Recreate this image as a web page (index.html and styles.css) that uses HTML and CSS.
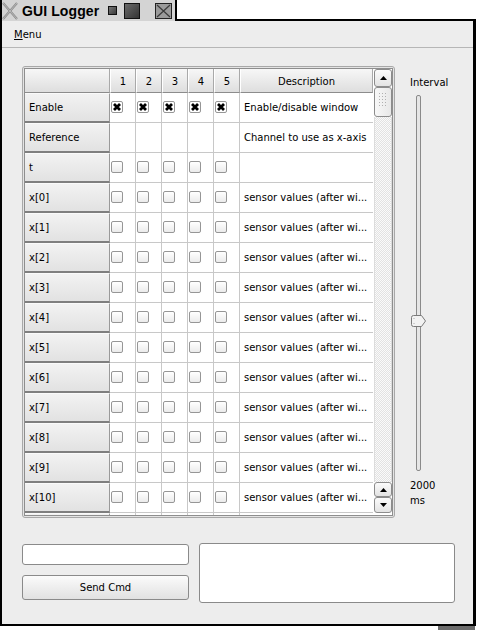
FILE: index.html
```html
<!DOCTYPE html>
<html>
<head>
<meta charset="utf-8">
<link rel="stylesheet" href="styles.css">
</head>
<body>
<div class="titlebar">
  <svg class="wm-icon" width="16" height="18" viewBox="0 0 16 18"><path d="M1 1 L15 17 M15 1 L1 17" stroke="#8c8c8c" stroke-width="2.2" fill="none"/><path d="M1 1 L15 17 M15 1 L1 17" stroke="#c4c4c4" stroke-width="0.8" fill="none"/></svg>
  <span class="title">GUI Logger</span>
  <span class="wbtn wbtn-min"></span>
  <span class="wbtn wbtn-max"></span>
  <svg class="wbtn-close" width="17" height="16" viewBox="0 0 17 16"><rect x="0.5" y="0.5" width="16" height="15" fill="#9a9a9a" stroke="#222"/><path d="M2 2 L15 14 M15 2 L2 14" stroke="#3a3a3a" stroke-width="1.2"/></svg>
</div>
<div class="window">
  <div class="menubar"><span class="menu"><span class="ul">M</span>enu</span></div>
  <div class="content">
    <div class="main">
      <div class="frame">
        <div class="frame-inner">
          <div class="grid">
            <div class="hcell corner"></div>
            <div class="hcell">1</div><div class="hcell">2</div><div class="hcell">3</div><div class="hcell">4</div><div class="hcell">5</div>
            <div class="hcell desc-h">Description</div>

            <div class="rh">Enable</div>
            <div class="cell"><span class="cb on"><svg width="10" height="10" viewBox="0 0 10 10"><path d="M2 2 L8 8 M8 2 L2 8" stroke="#000" stroke-width="2.8"/></svg></span></div>
            <div class="cell"><span class="cb on"><svg width="10" height="10" viewBox="0 0 10 10"><path d="M2 2 L8 8 M8 2 L2 8" stroke="#000" stroke-width="2.8"/></svg></span></div>
            <div class="cell"><span class="cb on"><svg width="10" height="10" viewBox="0 0 10 10"><path d="M2 2 L8 8 M8 2 L2 8" stroke="#000" stroke-width="2.8"/></svg></span></div>
            <div class="cell"><span class="cb on"><svg width="10" height="10" viewBox="0 0 10 10"><path d="M2 2 L8 8 M8 2 L2 8" stroke="#000" stroke-width="2.8"/></svg></span></div>
            <div class="cell"><span class="cb on"><svg width="10" height="10" viewBox="0 0 10 10"><path d="M2 2 L8 8 M8 2 L2 8" stroke="#000" stroke-width="2.8"/></svg></span></div>
            <div class="cell desc">Enable/disable window</div>

            <div class="rh">Reference</div>
            <div class="cell"></div><div class="cell"></div><div class="cell"></div><div class="cell"></div><div class="cell"></div>
            <div class="cell desc">Channel to use as x-axis</div>

            <div class="rh">t</div>
            <div class="cell"><span class="cb"></span></div><div class="cell"><span class="cb"></span></div><div class="cell"><span class="cb"></span></div><div class="cell"><span class="cb"></span></div><div class="cell"><span class="cb"></span></div>
            <div class="cell desc"></div>

            <div class="rh">x[0]</div>
            <div class="cell"><span class="cb"></span></div><div class="cell"><span class="cb"></span></div><div class="cell"><span class="cb"></span></div><div class="cell"><span class="cb"></span></div><div class="cell"><span class="cb"></span></div>
            <div class="cell desc">sensor values (after wi...</div>

            <div class="rh">x[1]</div>
            <div class="cell"><span class="cb"></span></div><div class="cell"><span class="cb"></span></div><div class="cell"><span class="cb"></span></div><div class="cell"><span class="cb"></span></div><div class="cell"><span class="cb"></span></div>
            <div class="cell desc">sensor values (after wi...</div>

            <div class="rh">x[2]</div>
            <div class="cell"><span class="cb"></span></div><div class="cell"><span class="cb"></span></div><div class="cell"><span class="cb"></span></div><div class="cell"><span class="cb"></span></div><div class="cell"><span class="cb"></span></div>
            <div class="cell desc">sensor values (after wi...</div>

            <div class="rh">x[3]</div>
            <div class="cell"><span class="cb"></span></div><div class="cell"><span class="cb"></span></div><div class="cell"><span class="cb"></span></div><div class="cell"><span class="cb"></span></div><div class="cell"><span class="cb"></span></div>
            <div class="cell desc">sensor values (after wi...</div>

            <div class="rh">x[4]</div>
            <div class="cell"><span class="cb"></span></div><div class="cell"><span class="cb"></span></div><div class="cell"><span class="cb"></span></div><div class="cell"><span class="cb"></span></div><div class="cell"><span class="cb"></span></div>
            <div class="cell desc">sensor values (after wi...</div>

            <div class="rh">x[5]</div>
            <div class="cell"><span class="cb"></span></div><div class="cell"><span class="cb"></span></div><div class="cell"><span class="cb"></span></div><div class="cell"><span class="cb"></span></div><div class="cell"><span class="cb"></span></div>
            <div class="cell desc">sensor values (after wi...</div>

            <div class="rh">x[6]</div>
            <div class="cell"><span class="cb"></span></div><div class="cell"><span class="cb"></span></div><div class="cell"><span class="cb"></span></div><div class="cell"><span class="cb"></span></div><div class="cell"><span class="cb"></span></div>
            <div class="cell desc">sensor values (after wi...</div>

            <div class="rh">x[7]</div>
            <div class="cell"><span class="cb"></span></div><div class="cell"><span class="cb"></span></div><div class="cell"><span class="cb"></span></div><div class="cell"><span class="cb"></span></div><div class="cell"><span class="cb"></span></div>
            <div class="cell desc">sensor values (after wi...</div>

            <div class="rh">x[8]</div>
            <div class="cell"><span class="cb"></span></div><div class="cell"><span class="cb"></span></div><div class="cell"><span class="cb"></span></div><div class="cell"><span class="cb"></span></div><div class="cell"><span class="cb"></span></div>
            <div class="cell desc">sensor values (after wi...</div>

            <div class="rh">x[9]</div>
            <div class="cell"><span class="cb"></span></div><div class="cell"><span class="cb"></span></div><div class="cell"><span class="cb"></span></div><div class="cell"><span class="cb"></span></div><div class="cell"><span class="cb"></span></div>
            <div class="cell desc">sensor values (after wi...</div>

            <div class="rh">x[10]</div>
            <div class="cell"><span class="cb"></span></div><div class="cell"><span class="cb"></span></div><div class="cell"><span class="cb"></span></div><div class="cell"><span class="cb"></span></div><div class="cell"><span class="cb"></span></div>
            <div class="cell desc">sensor values (after wi...</div>

            <div class="rh"></div>
            <div class="cell"></div><div class="cell"></div><div class="cell"></div><div class="cell"></div><div class="cell"></div>
            <div class="cell desc"></div>
          </div>
          <div class="vscroll">
            <div class="sb-btn"><svg width="7" height="4" viewBox="0 0 7 4"><path d="M0 4 L3.5 0 L7 4 Z" fill="#000"/></svg></div>
            <div class="sb-thumb"><span class="grip"></span></div>
            <div class="sb-track"></div>
            <div class="sb-btn small"><svg width="7" height="4" viewBox="0 0 7 4"><path d="M0 4 L3.5 0 L7 4 Z" fill="#000"/></svg></div>
            <div class="sb-btn small tall"><svg width="7" height="4" viewBox="0 0 7 4"><path d="M0 0 L3.5 4 L7 0 Z" fill="#000"/></svg></div>
          </div>
        </div>
      </div>
      <div class="slider-col">
        <div class="lbl">Interval</div>
        <div class="groove">
          <svg class="handle" width="15" height="12" viewBox="0 0 15 12"><path d="M0.5 2.5 Q0.5 0.5 2.5 0.5 L10.5 0.5 L14.5 6 L10.5 11.5 L2.5 11.5 Q0.5 11.5 0.5 9.5 Z" fill="#f2f2f2" stroke="#7a7a7a"/><path d="M3 3 L3 4 M3 8 L3 9" stroke="#aaa"/></svg>
        </div>
        <div class="val">2000</div>
        <div class="unit">ms</div>
      </div>
    </div>
    <div class="bottom">
      <div class="left">
        <div class="input"></div>
        <div class="button">Send Cmd</div>
      </div>
      <div class="textarea"></div>
    </div>
  </div>
</div>
<div class="shadow"></div>
</body>
</html>
```
FILE: styles.css
```css
* { box-sizing: border-box; }
body {
  margin: 0;
  background: #fff;
  font-family: "DejaVu Sans", sans-serif;
  font-size: 10px;
  color: #000;
  width: 477px;
  height: 630px;
  overflow: hidden;
}
.titlebar {
  display: flex;
  align-items: center;
  width: 177px;
  height: 21px;
  background: #d4d4d4;
  border-right: 2px solid #000;
  border-left: 2px solid #000;
  position: relative;
  z-index: 1;
}
.wm-icon { flex: none; }
.title {
  font-family: "Liberation Sans", Arial, sans-serif;
  font-weight: bold;
  font-size: 14px;
  margin-left: 4px;
  letter-spacing: 0.1px;
}
.wbtn { display: block; flex: none; border: 1px solid #111; }
.wbtn-min {
  width: 9px; height: 9px;
  margin-left: 9px;
  background: linear-gradient(135deg, #777, #3a3a3a);
}
.wbtn-max {
  width: 16px; height: 16px;
  margin-left: 7px;
  background: linear-gradient(135deg, #6a6a6a, #333);
}
.wbtn-close { margin-left: 15px; flex: none; }

.window {
  margin-top: -2px;
  width: 476px;
  height: 607px;
  border: 2px solid #000;
  border-right-width: 3px;
  background: #ededed;
  display: flex;
  flex-direction: column;
}
.menubar {
  height: 27px;
  border-bottom: 1px solid #b6b6b6;
  display: flex;
  align-items: center;
  padding-left: 12px;
  padding-top: 1px;
  flex: none;
}
.ul { text-decoration: underline; }
.content {
  padding: 18px 0 0 20px;
  display: flex;
  flex-direction: column;
}
.main { display: flex; height: 452px; }
.frame {
  width: 373px;
  height: 452px;
  border: 1px solid #a8a8a8;
  border-radius: 3px;
  padding: 1px;
  background: #e4e4e4;
}
.frame-inner {
  height: 100%;
  border: 1px solid #8e8e8e;
  background: #fff;
  display: flex;
  overflow: hidden;
}
.grid {
  width: 348px;
  height: 446px;
  overflow: hidden;
  display: grid;
  grid-template-columns: 85px repeat(5, 26px) 133px;
  grid-template-rows: 24px;
  grid-auto-rows: 30px;
  align-content: start;
  flex: none;
}
.hcell {
  background: linear-gradient(#f7f7f7, #dedede);
  border-right: 1px solid #a9a9a9;
  border-bottom: 1px solid #8c8c8c;
  border-left: 1px solid #fff;
  display: flex;
  align-items: center;
  justify-content: center;
  padding-top: 1px;
}
.corner { border-left: none; }
.rh {
  background: linear-gradient(#f2f2f2, #e2e2e2);
  border-top: 1px solid #fafafa;
  border-right: 1px solid #9a9a9a;
  border-bottom: 2px solid #7f7f7f;
  display: flex;
  align-items: center;
  padding-left: 4px;
}
.cell {
  border-right: 1px solid #c8c8c8;
  border-bottom: 1px solid #c8c8c8;
  display: flex;
  align-items: center;
  padding-left: 1px;
}
.desc { padding-left: 4px; border-right: none; white-space: nowrap; overflow: hidden; }
.cb {
  width: 12px;
  height: 12px;
  border: 1px solid #969696;
  border-radius: 2px;
  background: linear-gradient(#ffffff, #ebebeb);
  display: flex;
  align-items: center;
  justify-content: center;
  margin-top: -1px;
}
.cb.on { background: #fff; }
.vscroll {
  width: 19px;
  padding-left: 1px;
  display: flex;
  flex-direction: column;
  background: #fff;
}
.sb-btn {
  height: 18px;
  border: 1px solid #8c8c8c;
  border-radius: 3px;
  background: linear-gradient(#fbfbfb, #e3e3e3);
  display: flex;
  align-items: center;
  justify-content: center;
  flex: none;
}
.sb-btn.small { height: 15px; }
.sb-btn.tall { height: 16px; margin-bottom: 2px; }
.sb-thumb {
  height: 30px;
  border: 1px solid #8c8c8c;
  border-radius: 3px;
  background: linear-gradient(90deg, #f8f8f8, #e8e8e8);
  display: flex;
  justify-content: center;
  padding-top: 4px;
  flex: none;
}
.grip {
  width: 10px;
  height: 14px;
  background-image: radial-gradient(circle, #b0b0b0 0.6px, transparent 0.8px);
  background-size: 3px 3px;
}
.sb-track {
  flex: 1;
  background: repeating-conic-gradient(#e2e2e2 0 25%, #fafafa 0 50%) 0 0 / 2px 2px;
  border-left: 1px solid #dcdcdc;
  border-right: 1px solid #dcdcdc;
}
.slider-col {
  padding-left: 15px;
  padding-top: 11px;
  display: flex;
  flex-direction: column;
}
.lbl { height: 12px; }
.groove {
  margin-top: 6px;
  margin-left: 6px;
  width: 5px;
  height: 376px;
  border: 1px solid #8a8a8a;
  border-radius: 2px;
  background: #e6e6e6;
  position: relative;
}
.handle { position: absolute; left: -6px; top: 219px; }
.val { margin-top: 9px; height: 15px; }
.unit { height: 12px; }
.bottom {
  display: flex;
  margin-top: 25px;
}
.left { width: 167px; padding-top: 1px; }
.input {
  height: 21px;
  border: 1px solid #8a8a8a;
  border-radius: 3px;
  background: #fff;
}
.button {
  margin-top: 10px;
  height: 25px;
  border: 1px solid #8a8a8a;
  border-radius: 3px;
  background: linear-gradient(#fbfbfb, #e1e1e1);
  display: flex;
  align-items: center;
  justify-content: center;
}
.textarea {
  margin-left: 10px;
  width: 256px;
  height: 60px;
  border: 1px solid #8a8a8a;
  border-radius: 3px;
  background: #fff;
}
.shadow {
  margin-left: 438px;
  width: 37px;
  height: 4px;
  background: #6c6c6c;
}
```
